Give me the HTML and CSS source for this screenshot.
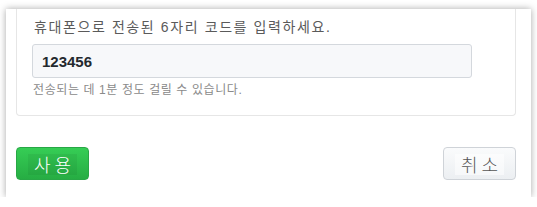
FILE: index.html
```html
<!DOCTYPE html>
<html lang="ko">
<head>
    <meta charset="UTF-8">
    <title>인증 코드 입력</title>
    <link rel="stylesheet" href="styles.css">
</head>
<body>
    <div class="dialog">
        <div class="panel">
            <p class="panel-title">휴대폰으로 전송된 6자리 코드를 입력하세요.</p>
            <input type="text" class="code-input" value="123456">
            <p class="panel-hint">전송되는 데 1분 정도 걸릴 수 있습니다.</p>
        </div>

        <div class="dialog-footer">
            <button class="btn btn-primary"><span>사용</span></button>
            <button class="btn btn-default"><span>취소</span></button>
        </div>
    </div>
</body>
</html>
```

FILE: styles.css
```css
* {
    margin: 0;
    padding: 0;
    box-sizing: border-box;
}

body {
    font-family: 'Liberation Sans', 'Noto Sans CJK KR', sans-serif;
    background-color: #fff;
    color: #555;
    padding: 9px 6px 0 6px;
}

.dialog {
    width: 525px;
    height: 188px;
    background-color: #fff;
    box-shadow: 0 0 7px rgba(0, 0, 0, 0.35);
    padding: 0 15px 0 10px;
}

.panel {
    border: 1px solid #e6e6e6;
    border-top: none;
    border-radius: 0 0 4px 4px;
    padding: 8px 15px 17px 15px;
    height: 107px;
}

.panel-title {
    font-size: 14px;
    line-height: 20px;
    letter-spacing: 1.6px;
    color: #5a5a5a;
    margin-left: 2px;
}

.code-input {
    display: block;
    width: 440px;
    height: 34px;
    margin-top: 7px;
    padding: 0 9px;
    font-family: 'Liberation Sans', sans-serif;
    font-size: 15px;
    font-weight: 700;
    color: #24292e;
    background-color: #f7f8fa;
    border: 1px solid #d4d8dd;
    border-radius: 3px;
    outline: none;
}

.panel-hint {
    font-size: 12px;
    line-height: 16px;
    letter-spacing: 0.6px;
    color: #8a8a8a;
    margin-top: 4px;
    margin-left: 1px;
}

.dialog-footer {
    display: flex;
    justify-content: space-between;
    margin-top: 31px;
}

.btn {
    width: 73px;
    height: 33px;
    border-radius: 4px;
    font-family: 'Noto Sans CJK KR', sans-serif;
    font-size: 18px;
    font-weight: 300;
    letter-spacing: 4px;
    cursor: pointer;
}

.btn span {
    display: inline-block;
    padding: 0 2px 0 6px;
    line-height: 21px;
}

.btn-primary {
    color: #fff;
    background: linear-gradient(#36cd55, #26ad43);
    border: 1px solid #28a745;
}

.btn-primary span {
    background-color: rgba(0, 0, 0, 0.05);
}

.btn-default {
    color: #555;
    background: linear-gradient(#fafbfc, #eceff2);
    border: 1px solid #cfd3d8;
}

.btn-default span {
    background-color: rgba(255, 255, 255, 0.5);
}
```
